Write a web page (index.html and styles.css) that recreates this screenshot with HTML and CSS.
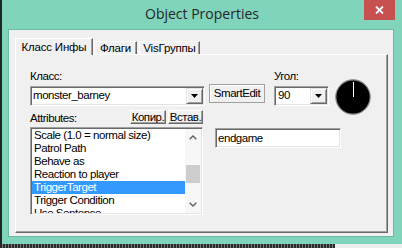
FILE: index.html
```html
<!DOCTYPE html>
<html lang="ru">
<head>
    <meta charset="UTF-8">
    <meta name="viewport" content="width=device-width, initial-scale=1.0">
    <title>Object Properties</title>
    <link rel="stylesheet" href="styles.css">
</head>
<body>
    <div class="desk">
        <div class="edge"></div>
        <div class="window">
            <div class="titlebar">
                <span class="title">Object Properties</span>
                <div class="close">
                    <svg width="9" height="8" viewBox="0 0 9 8"><path d="M1 0.5 L8 7.5 M8 0.5 L1 7.5" stroke="#fff" stroke-width="1.8"/></svg>
                </div>
            </div>

            <div class="client">
                <div class="tabs">
                    <div class="tab active">Класс Инфы</div>
                    <div class="tab flags">Флаги</div>
                    <div class="tab groups">VisГруппы</div>
                </div>

                <div class="panel">
                    <div class="row-top">
                        <div class="field field-class">
                            <div class="label">Класс:</div>
                            <div class="combo">
                                <span class="value">monster_barney</span>
                                <div class="drop"><svg width="7" height="4" viewBox="0 0 7 4"><path d="M0 0 H7 L3.5 4 Z" fill="#000"/></svg></div>
                            </div>
                        </div>
                        <div class="smartedit">SmartEdit</div>
                        <div class="field field-angle">
                            <div class="label">Угол:</div>
                            <div class="combo">
                                <span class="value">90</span>
                                <div class="drop"><svg width="7" height="4" viewBox="0 0 7 4"><path d="M0 0 H7 L3.5 4 Z" fill="#000"/></svg></div>
                            </div>
                        </div>
                        <div class="dial">
                            <svg width="36" height="36" viewBox="0 0 36 36">
                                <circle cx="18" cy="18" r="17.2" fill="#000" stroke="#8c8c8c" stroke-width="1.2"/>
                                <line x1="18.5" y1="3" x2="18.5" y2="18" stroke="#fff" stroke-width="1"/>
                            </svg>
                        </div>
                    </div>

                    <div class="row-bottom">
                        <div class="attrs">
                            <div class="attr-head">
                                <div class="label">Attributes:</div>
                                <div class="btn-sm copy">Копир.</div>
                                <div class="btn-sm paste">Встав.</div>
                            </div>
                            <div class="listbox">
                                <div class="items">
                                    <div class="item">Scale (1.0 = normal size)</div>
                                    <div class="item">Patrol Path</div>
                                    <div class="item">Behave as</div>
                                    <div class="item">Reaction to player</div>
                                    <div class="item sel">TriggerTarget</div>
                                    <div class="item">Trigger Condition</div>
                                    <div class="item">Use Sentence</div>
                                </div>
                                <div class="scroll">
                                    <div class="sb-btn"><svg width="8" height="5" viewBox="0 0 8 5"><path d="M0.7 4.3 L4 1 L7.3 4.3" fill="none" stroke="#606060" stroke-width="1.4"/></svg></div>
                                    <div class="sb-track"><div class="thumb"></div></div>
                                    <div class="sb-btn"><svg width="8" height="5" viewBox="0 0 8 5"><path d="M0.7 0.7 L4 4 L7.3 0.7" fill="none" stroke="#606060" stroke-width="1.4"/></svg></div>
                                </div>
                            </div>
                        </div>
                        <div class="textbox">endgame</div>
                    </div>
                </div>
            </div>
        </div>
    </div>
    <div class="taskbar">
        <div class="dots"></div>
        <div class="light"></div>
    </div>
</body>
</html>
```

FILE: styles.css
```css
* { box-sizing: border-box; }
body { margin: 0; width: 402px; height: 248px; overflow: hidden; background: #1d2723; font-family: "Liberation Sans", Arial, sans-serif; font-size: 11.5px; letter-spacing: -0.45px; color: #000; }

.desk { display: flex; height: 244px; }
.edge { width: 2px; background: #1d2723; }
.window { width: 400px; background: #80d4bc; }

.titlebar { display: grid; grid-template-columns: 1fr auto 1fr; height: 29px; }
.title { grid-column: 2; font-family: "Open Sans", sans-serif; font-size: 14px; letter-spacing: 0; color: #262626; line-height: 27px; }
.close { grid-column: 3; justify-self: end; width: 31px; height: 20px; margin-right: 7px; background: #c75050; display: flex; align-items: center; justify-content: center; }

.client { margin-left: 6px; width: 386px; height: 208px; border: 1px solid #6cb9a2; background: #f0f0f0; padding: 8px 0 0 6px; }

.tabs { display: flex; align-items: flex-end; height: 17px; margin-bottom: -1px; position: relative; z-index: 1; }
.tab { height: 13px; margin-bottom: 1px; background: #f0f0f0; border-top: 1px solid #fff; border-left: 1px solid #fff; border-right: 1px solid #696969; box-shadow: inset -1px 0 #a0a0a0; text-align: center; line-height: 12px; letter-spacing: -0.2px; }
.tab.active { height: 17px; width: 78px; margin-bottom: 0; padding-top: 2px; }
.tab.flags { width: 43px; margin-left: 1px; }
.tab.groups { width: 61px; margin-left: 2px; }

.panel { width: 373px; height: 179px; background: #f0f0f0; border: 1px solid; border-color: #fff #696969 #696969 #fff; box-shadow: inset -1px -1px #a0a0a0; padding: 15px 0 0 14px; }

.label { line-height: 13px; }
.field .label { height: 16px; }

.row-top { display: flex; align-items: flex-start; height: 36px; }
.field-class { width: 175px; }
.field-angle { width: 55px; margin-left: 9px; }

.combo { display: flex; height: 20px; background: #fff; border: 1px solid; border-color: #a0a0a0 #fff #fff #a0a0a0; box-shadow: inset 1px 1px #696969, inset -1px -1px #e3e3e3; padding: 1px; }
.combo .value { flex: 1; line-height: 15px; padding-left: 1px; white-space: nowrap; }
.field-angle .combo .value { padding-left: 2px; }
.drop { width: 17px; background: #f0f0f0; border: 1px solid; border-color: #e3e3e3 #696969 #696969 #e3e3e3; box-shadow: inset 1px 1px #fff, inset -1px -1px #a0a0a0; display: flex; align-items: center; justify-content: center; }

.smartedit { margin: 14px 0 0 4px; width: 56px; height: 19px; border: 1px solid #a0a0a0; box-shadow: inset 1px 1px #fff; text-align: center; line-height: 17px; }

.dial { margin: 9px 0 0 6px; width: 36px; height: 36px; flex-shrink: 0; }

.row-bottom { display: flex; margin-top: 4px; }
.attrs { width: 173px; }
.attr-head { display: flex; height: 17px; }
.attr-head .label { flex: 1; padding-top: 2px; }
.btn-sm { height: 14px; margin-left: 2px; background: #f0f0f0; border: 1px solid; border-color: #fff #696969 #696969 #fff; box-shadow: inset -1px -1px #a0a0a0; text-align: center; line-height: 12px; }
.btn-sm.copy { width: 36px; margin-left: 0; }
.btn-sm.paste { width: 35px; }

.listbox { display: flex; height: 88px; background: #fff; border: 1px solid; border-color: #a0a0a0 #fff #fff #a0a0a0; box-shadow: inset 1px 1px #696969, inset -1px -1px #e3e3e3; padding: 1px; }
.items { flex: 1; overflow: hidden; }
.item { line-height: 13px; padding-left: 2px; white-space: nowrap; }
.item.sel { background: #3399ff; color: #fff; }
.scroll { width: 16px; display: flex; flex-direction: column; background: #f7f7f7; }
.sb-btn { height: 17px; display: flex; align-items: center; justify-content: center; }
.sb-track { flex: 1; }
.thumb { margin: 19px 1px 0; height: 18px; background: #cdcdcd; }

.textbox { margin: 18px 0 0 12px; width: 126px; height: 20px; background: #fff; border: 1px solid; border-color: #a0a0a0 #fff #fff #a0a0a0; box-shadow: inset 1px 1px #696969, inset -1px -1px #e3e3e3; padding: 1px 2px; line-height: 16px; }

.taskbar { display: flex; height: 4px; }
.dots { width: 335px; background: repeating-linear-gradient(90deg, #2a2a2a 0 2px, #7a7a7a 2px 3px); }
.light { flex: 1; background: #eeeeee; }
```
